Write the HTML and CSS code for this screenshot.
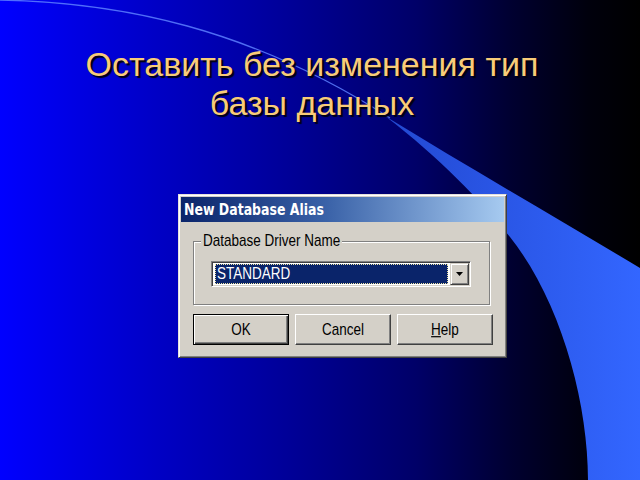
FILE: index.html
```html
<!DOCTYPE html>
<html lang="ru">
<head>
<meta charset="utf-8">
<title>Оставить без изменения тип базы данных</title>
<link rel="stylesheet" href="styles.css">
</head>
<body>
<div class="slide">
  <svg class="deco" width="640" height="480" viewBox="0 0 640 480" aria-hidden="true">
    <defs>
      <linearGradient id="wedge" x1="380" y1="0" x2="640" y2="0" gradientUnits="userSpaceOnUse">
        <stop offset="0" stop-color="#2248d0"/>
        <stop offset="1" stop-color="#3366ff"/>
      </linearGradient>
    </defs>
    <path d="M-2,0 C120,2 250,28 390,118" fill="none" stroke="#5d80ff" stroke-width="1.3" stroke-opacity="0.85"/>
    <path d="M385,116 C470,168 560,220 640,268 L640,480 L588,480 C588,400 560,300 510,237 C480,200 440,158 385,116 Z" fill="url(#wedge)"/>
  </svg>

  <h1 class="title">Оставить без изменения тип<br>базы данных</h1>

  <div class="dialog">
    <div class="titlebar"><span class="tx">New Database Alias</span></div>
    <div class="body">
      <fieldset class="group">
        <legend class="legend"><span class="tx">Database Driver Name</span></legend>
        <div class="combo">
          <div class="combo-value"><span class="tx">STANDARD</span></div>
          <div class="combo-btn">
            <svg width="7" height="4" viewBox="0 0 7 4"><path d="M0,0 H7 L3.5,4 Z" fill="#000"/></svg>
          </div>
        </div>
      </fieldset>
      <div class="buttons">
        <div class="btn btn-default"><span class="tx">OK</span></div>
        <div class="btn"><span class="tx">Cancel</span></div>
        <div class="btn"><span class="tx"><u>H</u>elp</span></div>
      </div>
    </div>
  </div>
</div>
</body>
</html>
```

FILE: styles.css
```css
html, body {
  margin: 0;
  padding: 0;
}
body {
  width: 640px;
  height: 480px;
  overflow: hidden;
  background: #000;
}
.slide {
  position: relative;
  width: 640px;
  height: 480px;
  overflow: hidden;
  background: linear-gradient(90deg, #0000ff 0%, #0000c4 25%, #000098 45%, #000068 65%, #000030 80%, #00000c 92%, #000000 100%);
  display: flex;
  flex-direction: column;
}
.deco {
  position: absolute;
  left: 0;
  top: 0;
}
.title {
  position: relative;
  margin: 45px 0 0 0;
  padding-right: 16px;
  font-family: "Liberation Sans", Arial, sans-serif;
  font-weight: normal;
  font-size: 34px;
  line-height: 39px;
  color: #f8cc78;
  text-align: center;
  text-shadow: 2px 2px 1px #000010;
}
.dialog {
  position: relative;
  margin: 71px 0 0 178px;
  width: 329px;
  height: 164px;
  box-sizing: border-box;
  background: #d4d0c8;
  border: 1px solid;
  border-color: #e4e1db #404040 #404040 #e4e1db;
  box-shadow: inset 1px 1px 0 #ffffff, inset -1px -1px 0 #808080;
  padding: 2px;
  display: flex;
  flex-direction: column;
}
.tx {
  display: inline-block;
  transform: scaleY(1.2);
}
.titlebar {
  height: 25px;
  background: linear-gradient(90deg, #0a246a 0%, #3a62a8 45%, #a6caf0 100%);
  color: #fff;
  font-family: "DejaVu Sans", Verdana, sans-serif;
  font-weight: bold;
  font-size: 12.5px;
  line-height: 25px;
  padding-left: 3px;
  white-space: nowrap;
}
.body {
  flex: 1;
  display: flex;
  flex-direction: column;
  padding: 0 11px 0 12px;
  font-family: "Liberation Sans", Arial, sans-serif;
  font-size: 13.5px;
  color: #000;
}
.group {
  margin: 11px 3px 0 0;
  padding: 12px 18px 17px 7px;
  border: 1px solid #808080;
  box-shadow: inset 1px 1px 0 #ffffff, 1px 1px 0 #ffffff;
  min-width: 0;
}
.legend {
  padding: 0 2px;
  line-height: 16px;
  background: #d4d0c8;
  white-space: nowrap;
}
.combo {
  margin-left: 10px;
  height: 26px;
  box-sizing: border-box;
  background: #fff;
  border: 1px solid;
  border-color: #808080 #ffffff #ffffff #808080;
  box-shadow: inset 1px 1px 0 #404040, inset -1px -1px 0 #d4d0c8;
  padding: 2px 2px 2px 3px;
  display: flex;
  gap: 2px;
}
.combo-value {
  flex: 1;
  background: #0a246a;
  border: 1px dotted #efe6a4;
  color: #fff;
  line-height: 18px;
  padding-left: 1px;
  white-space: nowrap;
}
.combo-btn {
  width: 19px;
  box-sizing: border-box;
  margin: -1px -1px -1px 0;
  background: #d4d0c8;
  border: 1px solid;
  border-color: #d4d0c8 #404040 #404040 #d4d0c8;
  box-shadow: inset 1px 1px 0 #ffffff, inset -1px -1px 0 #808080;
  display: flex;
  align-items: center;
  justify-content: center;
}
.buttons {
  display: flex;
  gap: 6px;
  margin-top: 9px;
}
.btn {
  width: 96px;
  height: 31px;
  box-sizing: border-box;
  border: 1px solid;
  border-color: #ffffff #404040 #404040 #ffffff;
  box-shadow: inset -1px -1px 0 #808080;
  display: flex;
  align-items: center;
  justify-content: center;
  white-space: nowrap;
}
.btn-default {
  border: 1px solid #000;
  box-shadow: inset 1px 1px 0 #ffffff, inset -1px -1px 0 #404040, inset -2px -2px 0 #808080;
}
```
